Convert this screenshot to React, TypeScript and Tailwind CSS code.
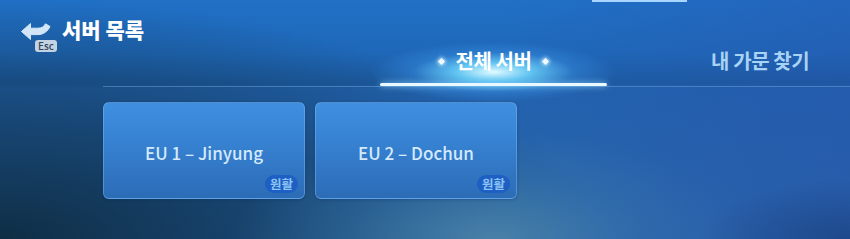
import React from "react";

function BackArrow() {
  return (
    <svg width="30" height="20" viewBox="0 0 30 20" className="block">
      <path d="M0.5 10.5 L9.5 2.5 L9.5 7.2 L17 7.2 C21 7.2 23 5.5 24.5 2.8 L29 5.5 C26.8 10.3 22.5 13.6 17 13.6 L9.5 13.6 L9.5 18.5 Z" fill="#d3e6f7" stroke="#d3e6f7" strokeWidth="1" strokeLinejoin="round" />
    </svg>
  );
}

function Diamond() {
  return <span className="block w-[5px] h-[5px] rotate-45 bg-[#f2f8ff] shadow-[0_0_4px_1px_rgba(200,235,255,0.9)]" />;
}

function Card({ name }: { name: string }) {
  return (
    <div className="relative w-[202px] h-[97px] rounded-[6px] border border-[rgba(130,185,240,0.45)] bg-[linear-gradient(180deg,#3f8fe0_0%,#3680d0_45%,#2c6cb6_100%)] shadow-[0_1px_3px_rgba(10,40,80,0.3)] flex items-center justify-center">
      <span className="text-[17px] font-medium text-[#d4eafc] leading-none tracking-[0px] mt-[3px]">{name}</span>
      <span className="absolute right-[6px] bottom-[5px] h-[18px] px-[5px] rounded-full bg-[#1d5fc2] text-[12.5px] leading-[18px] font-bold text-[#8cc4f5]">원활</span>
    </div>
  );
}

export default function App() {
  return (
    <div
      className="relative w-[850px] h-[239px] overflow-hidden bg-[linear-gradient(180deg,#2070c6_0%,#1f68b9_22%,#1c5aa0_35%,#2262ae_37%,#2a64ab_100%)]"
      style={{ fontFamily: '"Noto Sans CJK KR", "Noto Sans", sans-serif' }}
    >
      {/* decorative background layers */}
      <div className="absolute inset-0 bg-[radial-gradient(ellipse_600px_240px_at_0%_100%,rgba(14,44,66,0.97)_0%,rgba(18,58,92,0.75)_45%,transparent_100%)]" />
      <div className="absolute inset-0 bg-[radial-gradient(ellipse_260px_110px_at_58%_100%,rgba(78,135,170,0.85)_0%,rgba(60,125,170,0.4)_55%,transparent_100%)]" />
      <div className="absolute inset-0 bg-[radial-gradient(ellipse_150px_60px_at_100%_100%,rgba(20,60,110,0.8)_0%,transparent_100%)]" />
      <div className="absolute inset-0 bg-[linear-gradient(90deg,transparent_60%,rgba(40,80,170,0.35)_100%)]" />
      <div className="absolute left-[592px] top-0 w-[95px] h-[2px] bg-[#a8d6ff]" />

      <div className="relative flex flex-col">
        {/* header */}
        <div className="h-[44px] flex items-start pl-[21px] pt-[14px]">
          <div className="relative w-[41px] h-[26px] mt-[7px]">
            <BackArrow />
            <span className="absolute left-[14px] top-[19px] h-[12px] px-[3px] rounded-[3px] bg-[#c3d3e4] text-[10px] leading-[12px] font-medium text-[#334455]">Esc</span>
          </div>
          <span className="text-[21px] font-black text-white leading-[30px] tracking-[0px]">서버 목록</span>
        </div>

        {/* tabs */}
        <div className="h-[42px] flex pl-[380px]">
          <div className="relative w-[227px] flex flex-col items-center">
            <div className="absolute left-[-10px] right-[-10px] bottom-[-16px] h-[60px] bg-[radial-gradient(closest-side,rgba(225,252,255,1)_0%,rgba(110,215,255,0.85)_30%,rgba(60,150,235,0.4)_65%,transparent_100%)]" />
            <div className="relative flex items-center gap-[11px] mt-[3px]">
              <Diamond />
              <span className="text-[20px] font-bold text-white leading-[28px] tracking-[-0.4px]">전체 서버</span>
              <Diamond />
            </div>
            <div className="relative mt-auto w-full h-[3px] rounded-full bg-[#eaf8ff] shadow-[0_0_6px_rgba(150,220,255,0.9)]" />
          </div>
          <div className="pl-[104px] pt-[3px]">
            <span className="text-[20px] font-bold text-[#a9d3f5] leading-[28px] tracking-[-0.4px]">내 가문 찾기</span>
          </div>
        </div>

        <div className="ml-[103px] h-[1px] bg-[rgba(120,175,230,0.45)]" />

        {/* cards */}
        <div className="ml-[103px] mt-[15px] flex gap-[10px]">
          <Card name="EU 1 – Jinyung" />
          <Card name="EU 2 – Dochun" />
        </div>
      </div>
    </div>
  );
}
